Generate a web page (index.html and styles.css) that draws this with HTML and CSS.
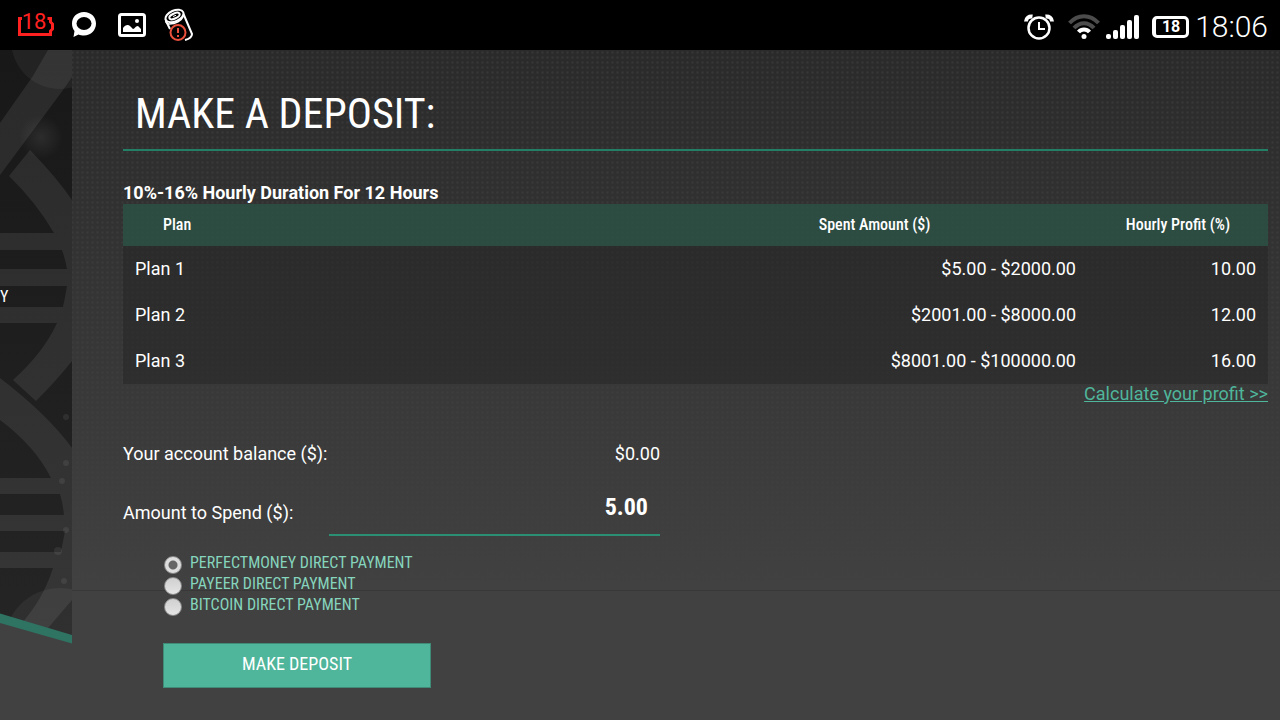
FILE: index.html
```html
<!DOCTYPE html>
<html lang="en">
<head>
  <meta charset="UTF-8">
  <meta name="viewport" content="width=device-width, initial-scale=1.0">
  <title>Make a Deposit</title>
  <link rel="stylesheet" href="styles.css">
</head>
<body>

<!-- Status bar -->
<header class="status-bar">
  <div class="status-group notices">
    <div class="battery-low">
      <svg width="36" height="26" viewBox="0 0 36 26" fill="none" stroke="#ff2020" stroke-width="3">
        <path d="M4 6.500H1.500V22.500H32.500V19L34.500 17V12L32.500 10V6.500H29.500"/>
      </svg>
      <span class="battery-low-text">18</span>
    </div>
    <svg width="28" height="28" viewBox="1 0 28 28">
      <path d="M13 1C6 1 1 6 1 12.500c0 3 1 5.500 2.500 7.500L2.500 26l5-2.500C9 24.200 11 24.500 13 24.500c7 0 12-5.500 12-12S20 1 13 1z" fill="#fff"/>
      <ellipse cx="13" cy="12.500" rx="7.500" ry="6.500" fill="#000"/>
    </svg>
    <svg width="28" height="24" viewBox="0 0 28 24">
      <rect x="1.500" y="1.500" width="25" height="21" rx="2" fill="none" stroke="#fff" stroke-width="3"/>
      <circle cx="19" cy="8" r="2" fill="#fff"/>
      <path d="M5 19v-4c2-3 5-4 7-2l3 3c2 0 2-3 5-3l3 3v3z" fill="#fff"/>
    </svg>
    <svg width="30" height="34" viewBox="0 0 30 34" fill="none" stroke="#fff" stroke-width="2">
      <ellipse cx="10.500" cy="8" rx="9.500" ry="5.500" transform="rotate(-24 10.500 8)"/>
      <ellipse cx="10.500" cy="8" rx="5.500" ry="2.500" transform="rotate(-24 10.500 8)"/>
      <path d="M9 8.500l3-1.200" stroke-width="1"/>
      <path d="M1.500 11c0 4 1 5 4 5 6 0 12-3 14-8" stroke-width="1.500"/>
      <path d="M2 13l4 8M19.500 6l8.500 20c0 3-3 5-7 6"/>
      <circle cx="14" cy="24.500" r="7.500" stroke="#e8503c" fill="#000"/>
      <path d="M14 20v5M14 27v2" stroke="#e8503c"/>
    </svg>
  </div>
  <div class="status-group system">
    <svg class="alarm" width="30" height="26" viewBox="0 0 30 26" fill="none" stroke="#fff">
      <circle cx="15" cy="14" r="10.500" stroke-width="2.500"/>
      <path d="M15 8v7h6" stroke-width="2"/>
      <path d="M2 7.500C2 4 5 2 8.500 2.500M28 7.500C28 4 25 2 21.500 2.500" stroke-width="4"/>
    </svg>
    <svg class="wifi" width="32" height="26" viewBox="0 0 32 26" fill="none" stroke-width="4">
      <path d="M1.500 9C10 0 22 0 30.500 9" stroke="#4c4c4c"/>
      <path d="M6 14c6-6.500 14-6.500 20 0" stroke="#4c4c4c"/>
      <path d="M10.500 18c3-3.500 8-3.500 11 0" stroke="#fff"/>
      <circle cx="16" cy="22.500" r="2.500" fill="#fff"/>
    </svg>
    <svg class="signal" width="34" height="24" viewBox="0 0 34 24" fill="#fff">
      <rect x="0" y="19" width="5" height="5" rx="2"/>
      <rect x="7" y="15" width="5" height="9" rx="2"/>
      <rect x="14" y="10" width="5" height="14" rx="2"/>
      <rect x="21" y="5" width="5" height="19" rx="2"/>
      <rect x="28" y="0" width="5" height="24" rx="2"/>
    </svg>
    <div class="battery">18</div>
    <time class="clock">18:06</time>
  </div>
</header>

<div class="page">
  <!-- Menu, only its right edge is in view -->
  <nav class="sidebar">
    <svg class="sidebar-art" viewBox="0 50 72 594" aria-hidden="true">
      <defs>
        <linearGradient id="base" x1="0" y1="0" x2="0" y2="1">
          <stop offset="0" stop-color="#181818"/>
          <stop offset="1" stop-color="#252525"/>
        </linearGradient>
        <linearGradient id="strand" gradientUnits="userSpaceOnUse" x1="0" y1="50" x2="0" y2="640">
          <stop offset="0" stop-color="#2a2a2a"/>
          <stop offset="1" stop-color="#363636"/>
        </linearGradient>
        <radialGradient id="glow">
          <stop offset="0" stop-color="#fff" stop-opacity=".08"/>
          <stop offset="1" stop-color="#fff" stop-opacity="0"/>
        </radialGradient>
        <clipPath id="edge"><path d="M0 50H72V637L0 616z"/></clipPath>
      </defs>
      <g clip-path="url(#edge)">
        <rect y="50" width="72" height="594" fill="url(#base)"/>
        <g fill="url(#strand)">
          <path d="M48 50H72V77L63 90L0 175V123L33 76z"/>
          <path d="M30 150Q57 178 72 200V361Q56 381 36 401L13 380Q44 352 57 323H0V307H63Q65 298 67 286H0V269H67Q65 258 62 250H0V233H54Q36 202 9 176z"/>
          <path d="M0 378Q48 415 72 448V600L48 628L20 625Q43 600 53 568H0V552H61Q63 542 65 531H0V515H64Q63 504 60 494H0V478H51Q35 446 0 420z"/>
        </g>
        <circle cx="60" cy="40" r="49" fill="#fff" fill-opacity=".05"/>
        <circle cx="60" cy="644" r="56" fill="#fff" fill-opacity=".05"/>
        <circle cx="41" cy="137" r="22" fill="url(#glow)"/>
        <g fill="#fff" fill-opacity=".07">
          <circle cx="66" cy="417" r="3"/>
          <circle cx="66" cy="463" r="3"/>
          <circle cx="62" cy="481" r="3"/>
          <circle cx="66" cy="530" r="3"/>
          <circle cx="58" cy="551" r="4"/>
          <circle cx="64" cy="581" r="3"/>
        </g>
      </g>
      <path d="M0 613.500L72 635V643.500L0 623z" fill="#2f7362"/>
    </svg>
    <a class="sidebar-link" href="#">Y</a>
  </nav>

  <main class="content">
    <h1>MAKE A DEPOSIT:</h1>

    <h2>10%-16% Hourly Duration For 12 Hours</h2>
    <table class="plans">
      <thead>
        <tr>
          <th class="col-plan">Plan</th>
          <th class="col-amount">Spent Amount ($)</th>
          <th class="col-profit">Hourly Profit (%)</th>
        </tr>
      </thead>
      <tbody>
        <tr><td>Plan 1</td><td>$5.00 - $2000.00</td><td>10.00</td></tr>
        <tr><td>Plan 2</td><td>$2001.00 - $8000.00</td><td>12.00</td></tr>
        <tr><td>Plan 3</td><td>$8001.00 - $100000.00</td><td>16.00</td></tr>
      </tbody>
    </table>
    <a class="calc-link" href="#">Calculate your profit &gt;&gt;</a>

    <form class="deposit">
      <div class="row">
        <span>Your account balance ($):</span>
        <span>$0.00</span>
      </div>
      <div class="row amount-row">
        <label for="amount">Amount to Spend ($):</label>
        <input class="amount" id="amount" type="text" value="5.00">
      </div>
      <div class="methods">
        <label><input type="radio" name="method" checked>PERFECTMONEY DIRECT PAYMENT</label>
        <label><input type="radio" name="method">PAYEER DIRECT PAYMENT</label>
        <label><input type="radio" name="method">BITCOIN DIRECT PAYMENT</label>
      </div>
      <button class="btn" type="submit">MAKE DEPOSIT</button>
    </form>
  </main>
</div>

</body>
</html>
```
FILE: styles.css
```css
* { margin: 0; padding: 0; box-sizing: border-box; }

body {
  font-family: Roboto, sans-serif;
  font-size: 18px;
  line-height: 24px;
  color: #fff;
  min-height: 100vh;
  display: flex;
  flex-direction: column;
  background: #414141;
}

svg { display: block; }

/* Status bar */
.status-bar {
  display: flex;
  justify-content: space-between;
  align-items: center;
  height: 50px;
  padding: 0 12px 0 18px;
  background: #000;
}

.status-group { display: flex; align-items: center; }
.notices { gap: 18px; }
.system { padding-top: 4px; }

.battery-low { display: grid; place-items: center; }
.battery-low > * { grid-area: 1 / 1; }
.battery-low-text {
  font-size: 22px;
  padding: 0 4px 6px 0;
  color: #ff2020;
}

.wifi { margin-left: 14px; }
.signal { margin: 0 12px 0 6px; }

.battery {
  width: 37px;
  height: 22px;
  border: 3px solid #fff;
  border-left-width: 4px;
  border-radius: 5px;
  font-size: 16px;
  font-weight: 700;
  line-height: 16px;
  text-align: center;
}

.clock {
  margin-left: 6px;
  font-size: 30px;
  font-weight: 300;
  line-height: 46px;
}

/* Page */
.page {
  flex: 1;
  display: grid;
  grid-template-columns: 72px 1fr;
  background:
    linear-gradient(#383838, #383838) 0 540px / 100% 1px no-repeat,
    linear-gradient(rgba(65, 65, 65, .05), #414141 540px),
    radial-gradient(circle, #373737, transparent 2px) 0 0 / 5px 5px,
    #292929;
}

.sidebar { display: grid; align-items: start; overflow: hidden; }
.sidebar > * { grid-area: 1 / 1; }
.sidebar-art { width: 100%; }
.sidebar-link {
  padding-top: 235px;
  font-family: "Roboto Condensed", "Liberation Sans Narrow", Roboto, sans-serif;
  font-size: 16px;
  color: #fff;
  text-decoration: none;
}

.content { padding: 32px 12px 32px 51px; }

h1 {
  padding: 0 12px 4px;
  border-bottom: 2px solid #237f66;
  font-family: "Roboto Condensed", "Liberation Sans Narrow", Roboto, sans-serif;
  font-size: 42px;
  font-weight: 400;
  line-height: 63px;
}

h2 {
  margin-top: 31px;
  font-size: 18px;
  font-weight: 700;
  line-height: 22px;
}

/* Plans */
.plans {
  width: 100%;
  border-collapse: collapse;
  table-layout: fixed;
  background: rgba(36, 36, 36, .5);
}

.plans th {
  height: 42px;
  background: rgba(45, 90, 75, .7);
  font-family: "Roboto Condensed", "Liberation Sans Narrow", Roboto, sans-serif;
  font-size: 16px;
  font-weight: 500;
}

.plans td { height: 46px; padding: 0 12px; text-align: right; }
.plans td:first-child { text-align: left; }
.plans th.col-plan { padding-left: 40px; text-align: left; }
.col-plan { width: 47%; }
.col-profit { width: 180px; }

.calc-link {
  display: block;
  width: fit-content;
  margin-left: auto;
  line-height: 20px;
  color: #4fb59b;
}

/* Deposit form */
.deposit { max-width: 537px; margin-top: 33px; }

.row {
  display: flex;
  justify-content: space-between;
  align-items: center;
  padding: 5px 0;
}

.amount-row { padding: 8px 0 0; }
.amount-row label { padding-top: 10px; }

.amount {
  width: 331px;
  height: 57px;
  padding: 0 12px;
  background: transparent;
  border: 0;
  border-bottom: 2px solid #2a8f73;
  font-family: "Roboto Condensed", "Liberation Sans Narrow", Roboto, sans-serif;
  font-size: 24px;
  font-weight: 700;
  color: #fff;
  text-align: right;
}

.methods { padding: 17px 41px 0; }

.methods label {
  display: flex;
  align-items: flex-start;
  gap: 8px;
  font-family: "Roboto Condensed", "Liberation Sans Narrow", Roboto, sans-serif;
  font-size: 16px;
  line-height: 20px;
  color: #86d5bd;
}

.methods input {
  appearance: none;
  width: 18px;
  height: 18px;
  margin-top: 3px;
  border: 1px solid #8a8a8a;
  border-radius: 50%;
  background: linear-gradient(#d0d0d0, #e4e4e4);
}

.methods input:checked {
  background: radial-gradient(circle, #666 4px, #ddd 5px);
}

.btn {
  width: 268px;
  height: 45px;
  margin: 27px 0 0 40px;
  padding-bottom: 5px;
  border: 1px solid #3f8b78;
  background: #4fb59b;
  font-family: "Roboto Condensed", "Liberation Sans Narrow", Roboto, sans-serif;
  font-size: 18px;
  color: #fff;
}
```
